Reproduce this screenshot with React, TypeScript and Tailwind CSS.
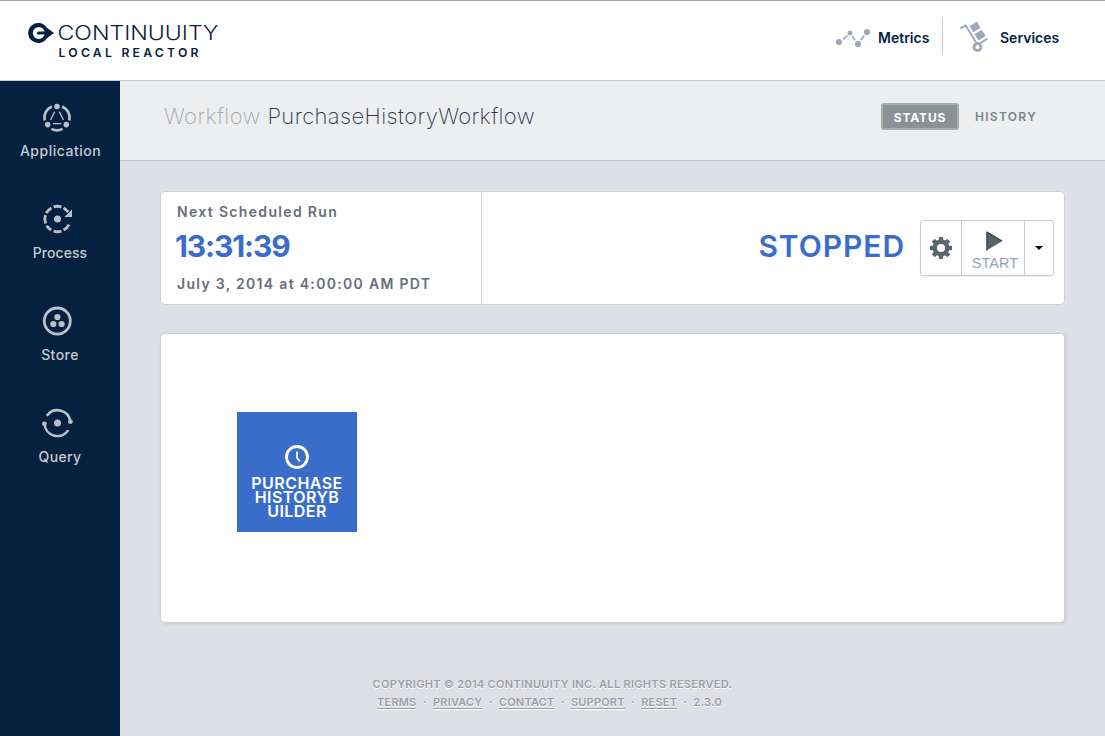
import type { ReactNode } from 'react';

const NAV_COLOR = '#b9c0c8';

function Logo() {
  return (
    <svg width="200" height="44" viewBox="24 18 200 44" role="img" aria-label="Continuuity Local Reactor">
      <path d="M54 33 L46.6 38.4 A10 10 0 1 1 46.6 27.6 Z" fill="#05213f" />
      <circle cx="38.8" cy="33" r="6" fill="#fff" />
      <path d="M38.5 31.4 H48 V34.6 H38.5 A1.6 1.6 0 0 1 38.5 31.4 Z" fill="#05213f" />
      <text x="57.5" y="40" textLength="161" lengthAdjust="spacingAndGlyphs" fontSize="19.5" className="font-light" fill="#05213f">
        CONTINUUITY
      </text>
      <text x="58.5" y="57" textLength="140" lengthAdjust="spacing" fontSize="12.2" className="font-semibold" fill="#05213f">
        LOCAL REACTOR
      </text>
    </svg>
  );
}

function MetricsIcon() {
  return (
    <svg className="mt-[4px]" width="36" height="22" viewBox="835 27 36 22" fill="#a2a6bb" stroke="#a2a6bb">
      <g stroke="none">
        <circle cx="839" cy="42" r="3.1" />
        <circle cx="850" cy="33" r="2.5" />
        <circle cx="858" cy="44" r="3.1" />
        <circle cx="867" cy="32" r="3.1" />
      </g>
      <path d="M843 39.4 L847.4 35.6 M852.3 36.2 L855 40.3 M860.6 40.2 L864.2 35.4" strokeWidth="1.7" />
    </svg>
  );
}

function ServicesIcon() {
  return (
    <svg width="30" height="32" viewBox="959 21 30 32" fill="#a2a6bb" stroke="#a2a6bb">
      <path d="M960.3 28.3 L965.7 25.6 L976 42.2" fill="none" strokeWidth="1.9" />
      <path d="M979.8 43.5 L987.5 38.6" strokeWidth="1.9" />
      <path d="M969.6 26.2 L976.8 21.8 L980.7 27.8 L973.4 32.2 Z" stroke="none" />
      <path d="M974.4 34.2 L981.6 29.8 L985.8 36 L978.4 40.6 Z" stroke="none" />
      <circle cx="977.5" cy="47" r="3.5" fill="none" strokeWidth="2.8" />
    </svg>
  );
}

function ApplicationIcon() {
  return (
    <svg width="34" height="34" viewBox="40 101 34 34" fill={NAV_COLOR} stroke={NAV_COLOR}>
      <g stroke="none">
        <circle cx="57" cy="106.5" r="2.8" />
        <circle cx="47.7" cy="124.6" r="2.8" />
        <circle cx="66.3" cy="124.6" r="2.8" />
      </g>
      <g fill="none" strokeWidth="2.7">
        <path d="M51.8 106.4 A12.7 12.7 0 0 0 44.6 120.5" />
        <path d="M62.2 106.4 A12.7 12.7 0 0 1 69.4 120.5" />
        <path d="M51.4 128.9 A12.7 12.7 0 0 0 62.6 128.9" />
      </g>
      <path d="M54.7 111.6 L50.6 120 M59.3 111.6 L63.4 120 M53 123.6 H61.2" strokeWidth="1.3" />
    </svg>
  );
}

function ProcessIcon() {
  return (
    <svg width="34" height="34" viewBox="40 203 34 34" fill={NAV_COLOR} stroke={NAV_COLOR}>
      <circle cx="57.5" cy="219" r="3.5" stroke="none" />
      <g fill="none" strokeWidth="2.8">
        <path d="M53.6 206.9 A12.7 12.7 0 0 1 61.4 206.9" />
        <path d="M46.2 213.2 A12.7 12.7 0 0 1 51.4 207.9" />
        <path d="M45.6 223.4 A12.7 12.7 0 0 1 45.4 215.2" />
        <path d="M51.2 230 A12.7 12.7 0 0 1 46.7 225.7" />
        <path d="M61.4 231.1 A12.7 12.7 0 0 1 53.6 231.1" />
        <path d="M69 224.6 A12.7 12.7 0 0 1 63.6 230.1" />
        <path d="M63.7 207.8 L68.2 212" />
      </g>
      <path d="M72 209.5 V217 H64.4 Z" stroke="none" />
    </svg>
  );
}

function StoreIcon() {
  return (
    <svg width="34" height="34" viewBox="40 305 34 34" fill={NAV_COLOR}>
      <circle cx="57.3" cy="321" r="13" fill="none" stroke={NAV_COLOR} strokeWidth="2.8" />
      <circle cx="57.4" cy="317" r="3.1" />
      <circle cx="53.3" cy="324" r="3.1" />
      <circle cx="61.6" cy="324" r="3.1" />
    </svg>
  );
}

function QueryIcon() {
  return (
    <svg width="34" height="34" viewBox="40 407 34 34" fill={NAV_COLOR}>
      <circle cx="57.5" cy="423" r="3.5" />
      <circle cx="44.4" cy="423.8" r="2.4" />
      <circle cx="70.4" cy="421.7" r="2.4" />
      <g fill="none" stroke={NAV_COLOR} strokeWidth="2.6" strokeLinecap="round">
        <path d="M47.5 415 A12.9 12.9 0 0 1 70.3 421.3" />
        <path d="M67.7 431 A12.9 12.9 0 0 1 44.6 424" />
      </g>
    </svg>
  );
}

function GearIcon() {
  return (
    <svg width="24" height="24" viewBox="-12 -12 24 24" fill="#59666a">
      <g>
        {[0, 45, 90, 135].map((a) => (
          <rect key={a} x="-2.2" y="-11" width="4.4" height="22" rx="0.8" transform={`rotate(${a})`} />
        ))}
      </g>
      <circle r="8.4" />
      <circle r="4" fill="#fff" />
    </svg>
  );
}

function NavItem({ label, className, children }: { label: string; className: string; children: ReactNode }) {
  return (
    <a className="flex h-[102px] flex-col items-center pt-[20px]">
      <span className="mr-[6px] h-[34px]">{children}</span>
      <span className={`mt-[6px] text-[14px] leading-5 font-medium whitespace-nowrap text-[#c5cbd0] ${className}`}>{label}</span>
    </a>
  );
}

function FooterLink({ children }: { children: ReactNode }) {
  return <a className="border-b border-[#9a9fa2] shadow-[0_1px_0_#fff]">{children}</a>;
}

export default function App() {
  return (
    <div className="flex h-[736px] w-[1105px] flex-col overflow-hidden bg-[#dfe0e5] font-['Inter','Liberation_Sans',sans-serif]">
      <header className="flex h-[81px] shrink-0 items-start justify-between border-t border-b border-t-[#a0a0a0] border-b-[#c8c9cd] bg-white pr-[46px] pl-[24px]">
        <div className="pt-[17px]">
          <Logo />
        </div>
        <div className="mt-[17px] flex h-[36px] items-center text-[14px] leading-5 font-semibold text-[#05213f]">
          <MetricsIcon />
          <span className="mt-[4px] ml-[7px] w-[64px] whitespace-nowrap">Metrics</span>
          <span className="h-[36px] w-px bg-[#c8c9cc]" />
          <span className="ml-[16px] pt-[2px]">
            <ServicesIcon />
          </span>
          <span className="mt-[4px] ml-[11px] w-[59px] whitespace-nowrap">Services</span>
        </div>
      </header>

      <div className="flex grow">
        <aside className="w-[120px] shrink-0 bg-[#05213f]">
          <NavItem label="Application" className="ml-px tracking-[0.5px]"><ApplicationIcon /></NavItem>
          <NavItem label="Process" className="tracking-[0.05px]"><ProcessIcon /></NavItem>
          <NavItem label="Store" className="tracking-[0.45px]"><StoreIcon /></NavItem>
          <NavItem label="Query" className="tracking-[0.35px]"><QueryIcon /></NavItem>
        </aside>

        <main className="flex grow flex-col">
          <div className="flex h-[80px] items-start justify-between border-b border-[#c3c5cb] bg-[#eceef0] pr-[69px] pl-[44px]">
            <h1 className="pt-[20px] text-[22px] leading-[31px] font-extralight tracking-[0.38px] whitespace-nowrap text-[#a9a9ab]">
              Workflow <span className="text-[#2f3350]">PurchaseHistoryWorkflow</span>
            </h1>
            <div className="flex items-center pt-[22px] text-[12px] leading-[23px]">
              <span className="h-[27px] w-[78px] rounded-[3px] border-2 border-[#a2adac] bg-[#8a9293] pt-px text-center font-bold tracking-[0.9px] text-white">STATUS</span>
              <span className="ml-[16px] w-[61px] font-semibold tracking-[1.3px] whitespace-nowrap text-[#78868a]">HISTORY</span>
            </div>
          </div>

          <section className="mt-[30px] ml-[40px] flex h-[114px] w-[905px] rounded-[5px] border border-[#cfd0d6] bg-white">
            <div className="w-[321px] border-r border-[#d8d9dd] pt-[10px] pl-[16px] whitespace-nowrap text-[#686d7b]">
              <div className="text-[14px] leading-5 font-semibold tracking-[1.33px]">Next Scheduled Run</div>
              <div className="mt-[8px] -ml-[2px] text-[30px] leading-[32px] font-bold tracking-[-1.1px] text-[#3a6dc9]">13:31:39</div>
              <div className="mt-[12px] text-[14px] leading-5 font-semibold tracking-[1.31px]">July 3, 2014 at 4:00:00 AM PDT</div>
            </div>
            <div className="flex grow items-start justify-end pt-[28px] pr-[10px]">
              <span className="mt-[10px] mr-[15px] text-[30px] leading-[32px] font-semibold tracking-[0.95px] text-[#3a6dc9]">STOPPED</span>
              <div className="flex h-[56px] w-[134px] rounded-[3px] border border-[#cccdd2] shadow-[0_1px_2px_rgba(0,0,0,0.07)]">
                <button className="flex w-[41px] items-center justify-center border-r border-[#cccdd2]">
                  <GearIcon />
                </button>
                <button className="flex w-[63px] flex-col items-center border-r border-[#cccdd2] pt-[10px] font-['Liberation_Sans',sans-serif] text-[14.5px] leading-[18px] text-[#969fbb]">
                  <svg className="ml-[2px]" width="17" height="20" viewBox="0 0 17 20">
                    <path d="M0.5 0.5 L16.5 10 L0.5 19.5 Z" fill="#56656a" />
                    <path d="M1 1 L16 10 M1 0.5 V19.5" stroke="#35464b" strokeWidth="1.2" />
                  </svg>
                  <span className="mt-[3px] ml-[4px] tracking-[0.1px]">START</span>
                </button>
                <button className="flex w-[28px] items-center justify-center">
                  <svg width="8" height="4" viewBox="0 0 8 4">
                    <path d="M0 0 H8 L4 4 Z" fill="#000" />
                  </svg>
                </button>
              </div>
            </div>
          </section>

          <section className="mt-[28px] ml-[40px] h-[290px] w-[905px] rounded-[5px] border border-[#cfd0d6] bg-white pt-[78px] pl-[76px] shadow-[1px_1px_3px_rgba(0,0,0,0.1)]">
            <div className="flex h-[120px] w-[120px] flex-col items-center bg-[#3a6dc9] pt-[33px]">
              <svg width="24" height="24" viewBox="0 0 24 24" fill="none" stroke="#fff">
                <circle cx="12" cy="12" r="10.5" strokeWidth="2.8" />
                <path d="M12 6.5 V13 L15 16.5" strokeWidth="1.8" />
              </svg>
              <div className="mt-[7px] w-[94px] text-center text-[16px] leading-[14px] font-semibold tracking-[0.45px] break-all text-white">
                PURCHASEHISTORYBUILDER
              </div>
            </div>
          </section>

          <footer className="mt-[52px] mr-[120px] flex flex-col items-center text-[11px] leading-[19px] font-semibold tracking-[0.3px] whitespace-nowrap text-[#9a9fa2] [text-shadow:0_1px_0_#fff]">
            <div>COPYRIGHT © 2014 CONTINUUITY INC. ALL RIGHTS RESERVED.</div>
            <div className="mt-[3px] mr-[6px] flex gap-[6.4px] leading-[11px] tracking-[0.2px]">
              <FooterLink>TERMS</FooterLink>
              <span>·</span>
              <FooterLink>PRIVACY</FooterLink>
              <span>·</span>
              <FooterLink>CONTACT</FooterLink>
              <span>·</span>
              <FooterLink>SUPPORT</FooterLink>
              <span>·</span>
              <FooterLink>RESET</FooterLink>
              <span>·</span>
              <span>2.3.0</span>
            </div>
          </footer>
        </main>
      </div>
    </div>
  );
}
